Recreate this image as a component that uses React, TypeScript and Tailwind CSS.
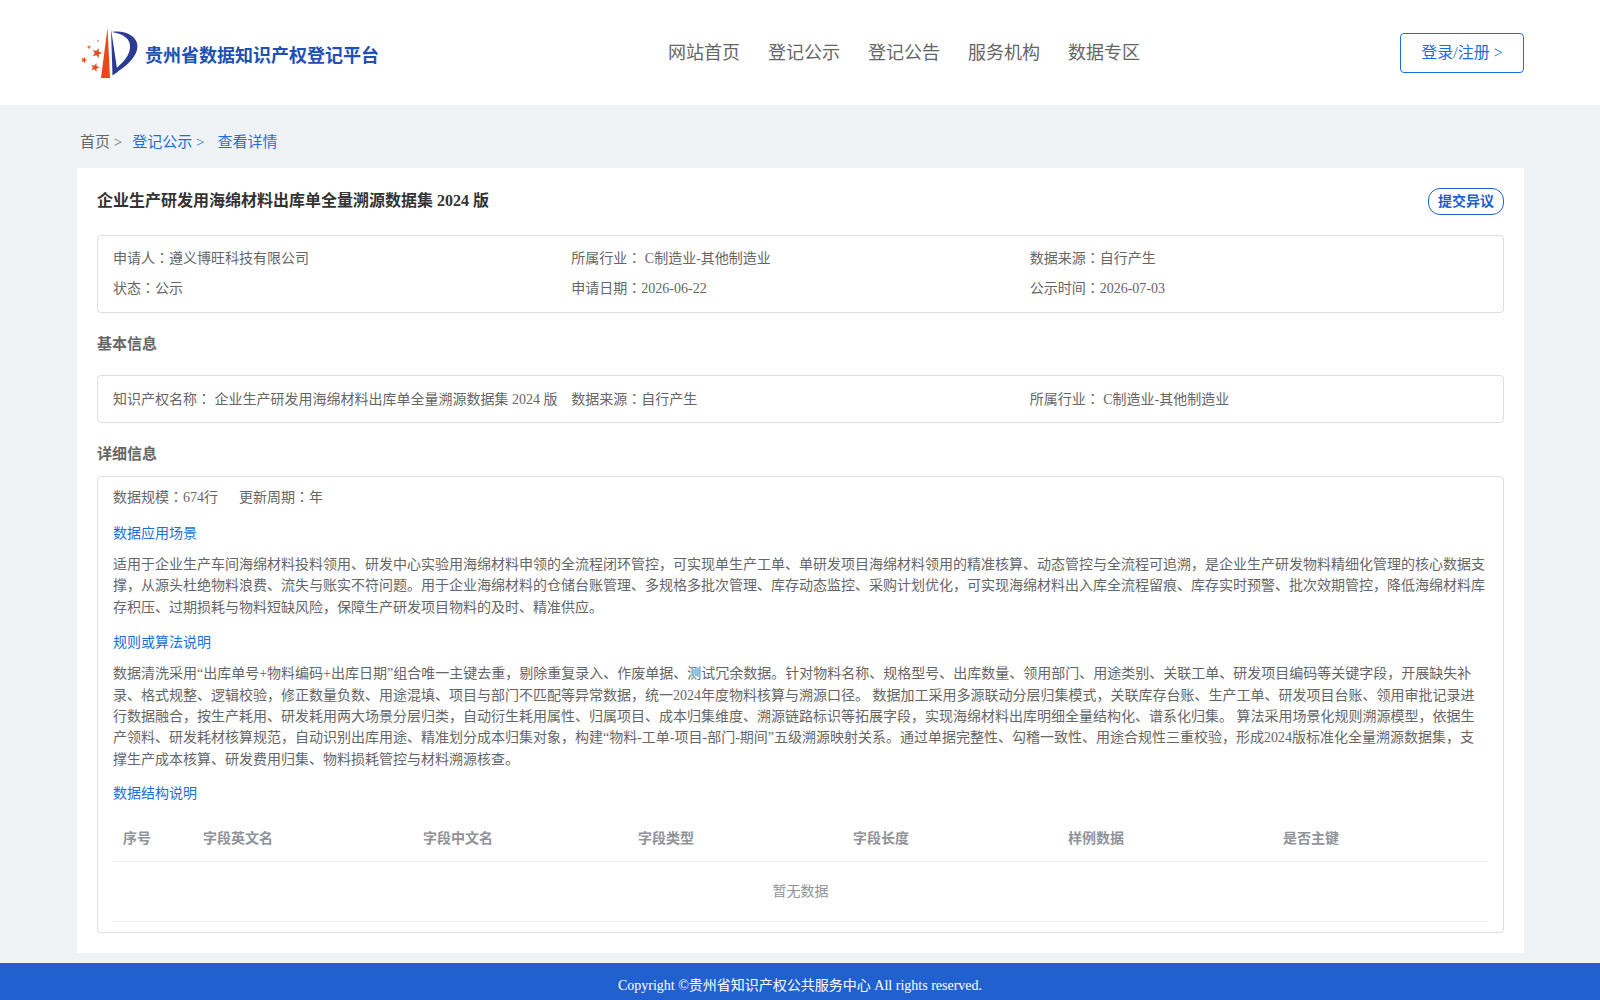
const NAV_ITEMS = ['网站首页', '登记公示', '登记公告', '服务机构', '数据专区']

const COLUMNS = [
  { label: '序号', width: 'w-[80px]' },
  { label: '字段英文名', width: 'w-[220px]' },
  { label: '字段中文名', width: 'w-[215px]' },
  { label: '字段类型', width: 'w-[215px]' },
  { label: '字段长度', width: 'w-[215px]' },
  { label: '样例数据', width: 'w-[215px]' },
  { label: '是否主键', width: 'w-[214px]' },
]

const SCENE_TEXT =
  '适用于企业生产车间海绵材料投料领用、研发中心实验用海绵材料申领的全流程闭环管控，可实现单生产工单、单研发项目海绵材料领用的精准核算、动态管控与全流程可追溯，是企业生产研发物料精细化管理的核心数据支撑，从源头杜绝物料浪费、流失与账实不符问题。用于企业海绵材料的仓储台账管理、多规格多批次管理、库存动态监控、采购计划优化，可实现海绵材料出入库全流程留痕、库存实时预警、批次效期管控，降低海绵材料库存积压、过期损耗与物料短缺风险，保障生产研发项目物料的及时、精准供应。'

const RULE_TEXT =
  '数据清洗采用“出库单号+物料编码+出库日期”组合唯一主键去重，剔除重复录入、作废单据、测试冗余数据。针对物料名称、规格型号、出库数量、领用部门、用途类别、关联工单、研发项目编码等关键字段，开展缺失补录、格式规整、逻辑校验，修正数量负数、用途混填、项目与部门不匹配等异常数据，统一2024年度物料核算与溯源口径。 数据加工采用多源联动分层归集模式，关联库存台账、生产工单、研发项目台账、领用审批记录进行数据融合，按生产耗用、研发耗用两大场景分层归类，自动衍生耗用属性、归属项目、成本归集维度、溯源链路标识等拓展字段，实现海绵材料出库明细全量结构化、谱系化归集。 算法采用场景化规则溯源模型，依据生产领料、研发耗材核算规范，自动识别出库用途、精准划分成本归集对象，构建“物料-工单-项目-部门-期间”五级溯源映射关系。通过单据完整性、勾稽一致性、用途合规性三重校验，形成2024版标准化全量溯源数据集，支撑生产成本核算、研发费用归集、物料损耗管控与材料溯源核查。'

function starPoints(cx: number, cy: number, r: number) {
  const pts: string[] = []
  for (let i = 0; i < 10; i++) {
    const a = -Math.PI / 2 + 0.3 + (i * Math.PI) / 5
    const d = i % 2 === 0 ? r : r * 0.42
    pts.push(`${(cx + d * Math.cos(a)).toFixed(2)},${(cy + d * Math.sin(a)).toFixed(2)}`)
  }
  return pts.join(' ')
}

function Logo() {
  return (
    <svg width="58" height="50" viewBox="0 0 58 50" className="shrink-0">
      <path d="M27.5 0 L30 50 L21 50 Z" fill="#e8481c" />
      <path d="M31 1 L37.5 44 L32.5 47.5 Z" fill="#2b3a92" />
      <path
        d="M32 4 C45 2 57 8 57.5 18 C57.5 28 47 38 37 44 L36 40.5 C44 34 50.5 26 50 18 C50 11 44 6 32 4 Z"
        fill="#2b3a92"
      />
      <polygon points={starPoints(17, 25, 5.3)} fill="#e8481c" />
      <polygon points={starPoints(15, 39.5, 4.6)} fill="#e8481c" />
      <polygon points={starPoints(4, 32, 3.4)} fill="#e8481c" />
      <circle cx="9" cy="19" r="1.6" fill="#ee7a50" />
      <circle cx="18" cy="13" r="1.1" fill="#f3a184" />
    </svg>
  )
}

// colon sits mid-height in the original font, the TC face has it that way
function Colon() {
  return <span className="font-['Noto_Sans_CJK_TC',sans-serif] leading-[0]">：</span>
}

function InfoItem({ label, value, gap }: { label: string; value: string; gap?: boolean }) {
  return (
    <div>
      {label}
      <Colon />
      {gap ? ' ' : ''}
      {value}
    </div>
  )
}

export default function App() {
  return (
    <div className="min-h-[1000px] bg-[#eff3f6] font-['Liberation_Serif','Noto_Sans_CJK_SC',serif] text-[14px] text-[#666]">
      <header className="flex h-[105px] items-start bg-white pl-[80px] pr-[76px]">
        <div className="flex h-[106px] w-[588px] items-center">
          <Logo />
          <span className="ml-[7px] mt-[6px] text-[18px] font-bold text-[#2150b4]">贵州省数据知识产权登记平台</span>
        </div>
        <nav className="flex h-[105px] flex-1 items-center gap-[28px] pt-[1px] text-[18px] text-[#666]">
          {NAV_ITEMS.map((item) => (
            <a key={item}>{item}</a>
          ))}
        </nav>
        <button className="mt-[33px] h-[40px] w-[124px] rounded-[4px] border border-[#1a6fe0] bg-white text-[16px] text-[#1a6fe0]">
          登录/注册 &gt;
        </button>
      </header>

      <div className="flex h-[63px] items-center pl-[80px] pt-[11px] text-[15px]">
        <span>首页 &gt;</span>
        <span className="ml-[10px] text-[#1a6fe0]">登记公示 &gt;</span>
        <span className="ml-[13px] text-[#1a6fe0]">查看详情</span>
      </div>

      <main className="ml-[77px] mr-[76px] h-[785px] bg-white px-[20px] pt-[20px]">
        <div className="flex h-[47px] items-start justify-between">
          <h1 className="text-[16px] font-bold leading-[26px] text-[#333]">企业生产研发用海绵材料出库单全量溯源数据集 2024 版</h1>
          <button className="h-[27px] w-[76px] rounded-[12px] border border-[#2060cc] text-[14px] font-bold text-[#2060cc]">
            提交异议
          </button>
        </div>

        <section className="grid h-[78px] grid-cols-3 content-start rounded-[4px] border border-[#dcdfe6] px-[15px] py-[8px] leading-[30px]">
          <InfoItem label="申请人" value="遵义博旺科技有限公司" />
          <InfoItem label="所属行业" value="C制造业-其他制造业" gap />
          <InfoItem label="数据来源" value="自行产生" />
          <InfoItem label="状态" value="公示" />
          <InfoItem label="申请日期" value="2026-06-22" />
          <InfoItem label="公示时间" value="2026-07-03" />
        </section>

        <h2 className="flex h-[62px] items-center text-[15px] font-bold">基本信息</h2>

        <section className="grid h-[48px] grid-cols-3 items-center rounded-[4px] border border-[#dcdfe6] px-[15px]">
          <InfoItem label="知识产权名称" value="企业生产研发用海绵材料出库单全量溯源数据集 2024 版" gap />
          <InfoItem label="数据来源" value="自行产生" />
          <InfoItem label="所属行业" value="C制造业-其他制造业" gap />
        </section>

        <h2 className="flex h-[53px] items-center pt-[9px] text-[15px] font-bold">详细信息</h2>

        <section className="h-[457px] rounded-[4px] border border-[#dcdfe6] px-[15px]">
          <div className="flex h-[41px] items-center gap-[21px]">
            <InfoItem label="数据规模" value="674行" />
            <InfoItem label="更新周期" value="年" />
          </div>
          <h3 className="mt-[5px] leading-[21px] text-[#1a6fe0]">数据应用场景</h3>
          <p className="mt-[10px] leading-[21.4px]">{SCENE_TEXT}</p>
          <h3 className="mt-[14px] leading-[21px] text-[#1a6fe0]">规则或算法说明</h3>
          <p className="mt-[10px] leading-[21.4px]">{RULE_TEXT}</p>
          <h3 className="mt-[13px] leading-[21px] text-[#1a6fe0]">数据结构说明</h3>
          <div className="mt-[12px] flex h-[46px] items-center border-b border-[#ebeef5] font-bold text-[#909399]">
            {COLUMNS.map((col) => (
              <div key={col.label} className={`${col.width} shrink-0 pl-[10px]`}>
                {col.label}
              </div>
            ))}
          </div>
          <div className="flex h-[60px] items-center justify-center border-b border-[#ebeef5] text-[#909399]">暂无数据</div>
        </section>
      </main>

      <footer className="mt-[10px] flex h-[37px] items-center justify-center bg-[#2160cf] pt-[8px] text-white">
        Copyright ©贵州省知识产权公共服务中心 All rights reserved.
      </footer>
    </div>
  )
}
